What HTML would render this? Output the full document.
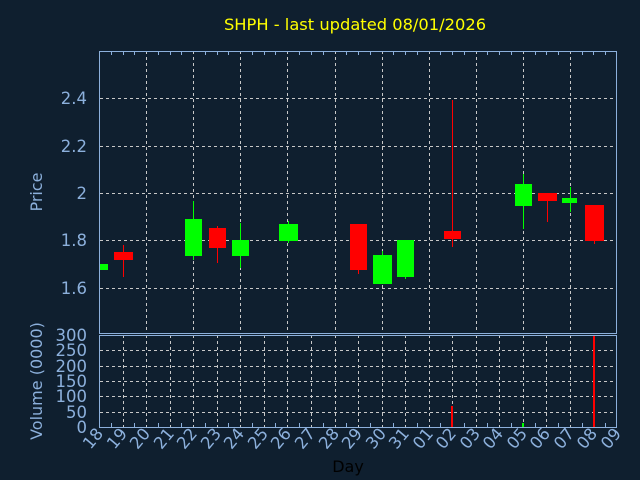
<!DOCTYPE html><html><head><style>body{margin:0;background:#0f1f2f}svg{display:block}text{font-family:"DejaVu Sans","Liberation Sans",sans-serif}</style></head><body>
<svg width="640" height="480" xmlns="http://www.w3.org/2000/svg">
<rect width="640" height="480" fill="#0f1f2f"/>
<text x="355" y="30" fill="#ffff00" font-size="16.3" text-anchor="middle">SHPH - last updated 08/01/2026</text>
<g stroke="#c8c8c8" stroke-dasharray="3,3" stroke-width="1">
<path d="M100 98.5H617M100 146.5H617M100 193.5H617M100 240.5H617M100 288.5H617"/>
<path d="M146.5 51V333M193.5 51V333M240.5 51V333M287.5 51V333M335.5 51V333M382.5 51V333M429.5 51V333M476.5 51V333M523.5 51V333M570.5 51V333"/>
<path d="M100 350.5H617M100 366.5H617M100 381.5H617M100 396.5H617M100 412.5H617"/>
<path d="M123.5 335V427M146.5 335V427M170.5 335V427M193.5 335V427M217.5 335V427M240.5 335V427M264.5 335V427M287.5 335V427M311.5 335V427M335.5 335V427M358.5 335V427M382.5 335V427M405.5 335V427M429.5 335V427M452.5 335V427M476.5 335V427M499.5 335V427M523.5 335V427M546.5 335V427M570.5 335V427M593.5 335V427"/>
</g>
<g stroke="#ff0000"><path d="M123.5 245V277M217.5 226V263M358.5 224V274M452.5 100V247M547.5 193V222M594.5 205V244"/></g>
<g stroke="#00ff00"><path d="M193.5 201V260M240.5 223V268M288.5 221V243M382.5 251V284M405.5 240V279M523.5 174V229M570.5 187V212"/></g>
<g fill="#ff0000"><rect x="114" y="252" width="19" height="8"/><rect x="209" y="228" width="17" height="20"/><rect x="350" y="224" width="17" height="46"/><rect x="444" y="231" width="17" height="8"/><rect x="538" y="193" width="19" height="8"/><rect x="585" y="205" width="19" height="36"/>
<rect x="451" y="406" width="2" height="21"/><rect x="593" y="335" width="2" height="92"/></g>
<g fill="#00ff00"><rect x="100" y="264" width="8" height="6"/><rect x="185" y="219" width="17" height="37"/><rect x="232" y="240" width="17" height="16"/><rect x="279" y="224" width="19" height="17"/><rect x="373" y="255" width="19" height="29"/><rect x="397" y="240" width="17" height="37"/><rect x="515" y="184" width="17" height="22"/><rect x="562" y="198" width="15" height="5"/>
<rect x="522" y="423" width="2" height="4"/></g>
<g stroke="#8cb0dc" fill="none"><rect x="99.5" y="51.5" width="517" height="282"/><path d="M99.5 335.5H617M99.5 335V427.5H617M616.5 335V427.5"/>
<path d="M111.5 51V55M123.5 51V55M134.5 51V55M158.5 51V55M170.5 51V55M181.5 51V55M205.5 51V55M217.5 51V55M228.5 51V55M252.5 51V55M264.5 51V55M275.5 51V55M299.5 51V55M311.5 51V55M323.5 51V55M346.5 51V55M358.5 51V55M370.5 51V55M393.5 51V55M405.5 51V55M417.5 51V55M440.5 51V55M452.5 51V55M464.5 51V55M487.5 51V55M499.5 51V55M511.5 51V55M535.5 51V55M546.5 51V55M558.5 51V55M582.5 51V55M593.5 51V55M605.5 51V55"/>
<path d="M111.5 427V423M134.5 427V423M158.5 427V423M181.5 427V423M205.5 427V423M228.5 427V423M252.5 427V423M275.5 427V423M299.5 427V423M323.5 427V423M346.5 427V423M370.5 427V423M393.5 427V423M417.5 427V423M440.5 427V423M464.5 427V423M487.5 427V423M511.5 427V423M535.5 427V423M558.5 427V423M582.5 427V423M605.5 427V423"/></g>
<g fill="#8cb0dc" font-size="16.5" text-anchor="end">
<text x="87" y="104">2.4</text><text x="87" y="152">2.2</text><text x="87" y="199">2</text><text x="87" y="246">1.8</text><text x="87" y="294">1.6</text>
<text x="87" y="341">300</text><text x="87" y="356">250</text><text x="87" y="372">200</text><text x="87" y="387">150</text><text x="87" y="402">100</text><text x="87" y="418">50</text><text x="87" y="433">0</text>
</g>
<text transform="translate(42,192) rotate(-90)" fill="#8cb0dc" font-size="16" text-anchor="middle">Price</text>
<text transform="translate(42,381) rotate(-90)" fill="#8cb0dc" font-size="16" text-anchor="middle">Volume (0000)</text>
<g fill="#8cb0dc" font-size="16.5" text-anchor="end">
<text transform="translate(104,434) rotate(-50)">18</text><text transform="translate(128,434) rotate(-50)">19</text><text transform="translate(151,434) rotate(-50)">20</text><text transform="translate(175,434) rotate(-50)">21</text><text transform="translate(198,434) rotate(-50)">22</text><text transform="translate(222,434) rotate(-50)">23</text><text transform="translate(245,434) rotate(-50)">24</text><text transform="translate(269,434) rotate(-50)">25</text><text transform="translate(292,434) rotate(-50)">26</text><text transform="translate(316,434) rotate(-50)">27</text><text transform="translate(340,434) rotate(-50)">28</text><text transform="translate(363,434) rotate(-50)">29</text><text transform="translate(387,434) rotate(-50)">30</text><text transform="translate(410,434) rotate(-50)">31</text><text transform="translate(434,434) rotate(-50)">01</text><text transform="translate(457,434) rotate(-50)">02</text><text transform="translate(481,434) rotate(-50)">03</text><text transform="translate(504,434) rotate(-50)">04</text><text transform="translate(528,434) rotate(-50)">05</text><text transform="translate(551,434) rotate(-50)">06</text><text transform="translate(575,434) rotate(-50)">07</text><text transform="translate(598,434) rotate(-50)">08</text><text transform="translate(622,434) rotate(-50)">09</text>
</g>
<text x="348" y="472" fill="#000" font-size="16" text-anchor="middle">Day</text>
</svg></body></html>
